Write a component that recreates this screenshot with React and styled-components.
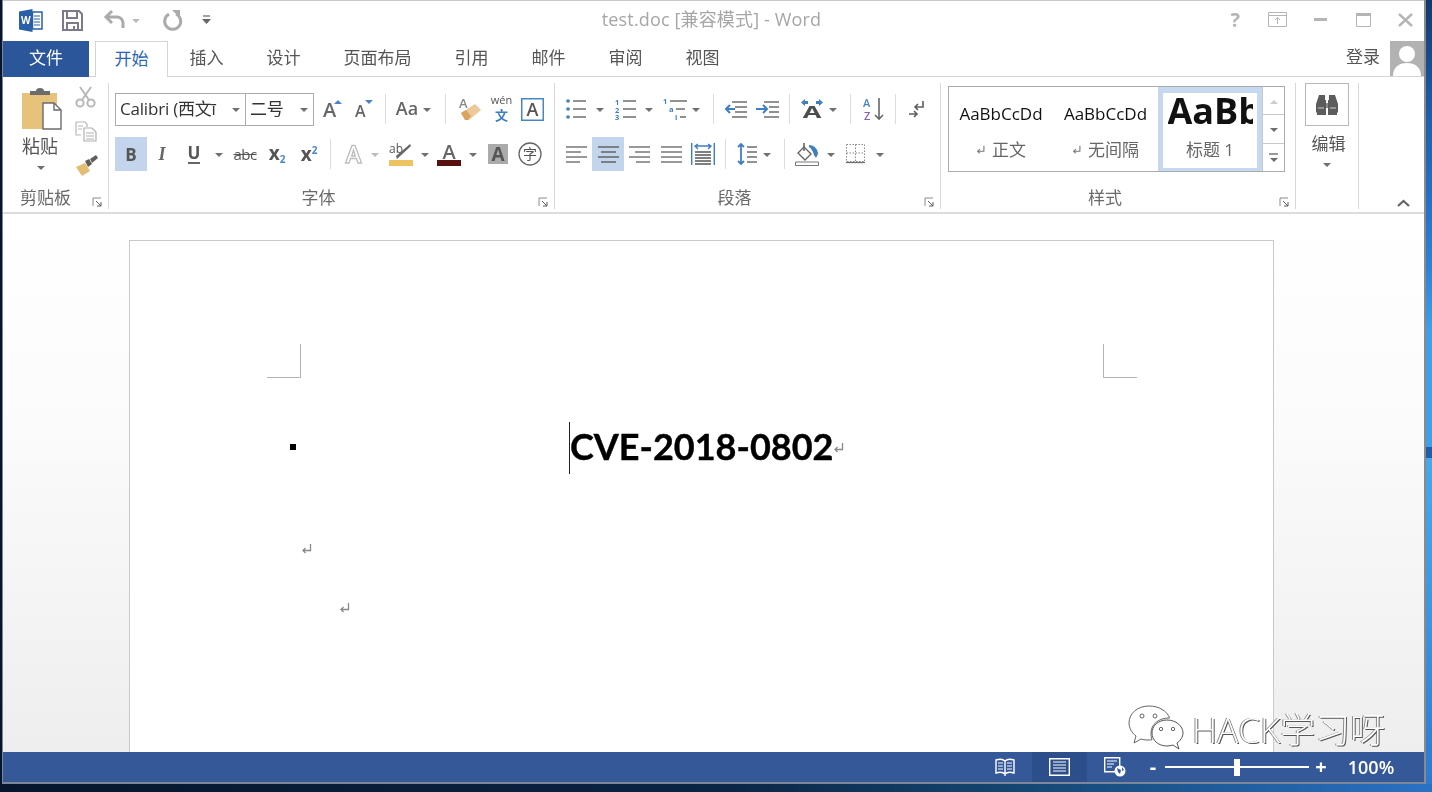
import React from 'react';
import styled, { createGlobalStyle } from 'styled-components';

const GlobalStyle = createGlobalStyle`
  html, body { margin: 0; padding: 0; height: 100%; overflow: hidden; }
  body {
    background: #0a2444;
    font-family: "Open Sans", "Noto Sans CJK SC", sans-serif;
  }
`;

const UI = `"Open Sans", "Noto Sans CJK SC", sans-serif`;

const Desktop = styled.div`
  width: 1432px;
  height: 792px;
  padding-left: 3px;
  box-sizing: border-box;
  background:
    linear-gradient(180deg, #123a6e 0, #1f5fae 120px, #2a7fd6 260px, #3f9fe8 330px, #3fa0ea 447px, #1f5ea6 447px, #1f5ea6 458px, #47a8ee 458px, #3b95e0 620px, #2b78d0 792px) right top / 8px 784px no-repeat,
    linear-gradient(90deg, #05162c 0, #0a2444 50%, #13456f 70%, #2a72c4 100%);
`;

const Window = styled.div`
  position: relative;
  width: 1421px;
  height: 784px;
  background: #fff;
  display: flex;
  flex-direction: column;
  border-top: 1px solid #c8c8c8;
  box-sizing: border-box;
  box-shadow: 2px 0 0 #8a8a8a, -1px 0 0 #7d8798;
  filter: blur(0.5px);
`;

const TitleBar = styled.div`
  height: 40px;
  flex: none;
  display: grid;
  grid-template-columns: 1fr auto 1fr;
  align-items: center;
`;

const QuickAccess = styled.div`
  display: flex;
  align-items: center;
  padding: 0 0 2px 15px;
`;

const Title = styled.div`
  font-size: 18px;
  letter-spacing: 0.15px;
  color: #a6a6a6;
  margin: -6px 0 0 -4px;
`;

const WindowButtons = styled.div`
  display: flex;
  justify-content: flex-end;
  align-items: center;
  padding: 0 11px 3px 0;
`;

const Ico = styled.svg`
  display: block;
  flex: none;
  overflow: visible;
  margin-left: ${p => p.$ml || 0}px;
`;

const TabRow = styled.div`
  height: 36px;
  flex: none;
  display: flex;
  align-items: stretch;
  border-bottom: 1px solid #d4d4d4;
  box-sizing: border-box;
`;

const FileTab = styled.div`
  width: 86px;
  display: flex;
  align-items: center;
  justify-content: center;
  background: #2b579a;
  color: #fff;
  font-size: 17px;
  padding-bottom: 5px;
  box-sizing: border-box;
  margin-right: 6px;
  margin-bottom: -1px;
`;

const Tab = styled.div`
  display: flex;
  align-items: center;
  padding: 0 21.5px 5px;
  font-size: 17px;
  color: ${p => (p.$active ? '#2b66b0' : '#555')};
  ${p => p.$active && `
    width: 73px;
    padding: 0 0 5px;
    justify-content: center;
    box-sizing: border-box;
    background: #fff;
    border: 1px solid #d4d4d4;
    border-bottom: none;
    margin-bottom: -1px;
    position: relative;
  `}
`;

const SignIn = styled.div`
  margin-left: auto;
  display: flex;
  align-items: center;
  font-size: 17px;
  color: #555;
  gap: 10px;
`;

const SignText = styled.span`
  margin-top: -7px;
`;

const Avatar = styled.div`
  width: 34px;
  height: 35px;
  background: #b2b2b2;
  overflow: hidden;
`;

const Ribbon = styled.div`
  height: 137px;
  flex: none;
  display: flex;
  padding-top: 6px;
  box-sizing: border-box;
  border-bottom: 2px solid #dcdcdc;
  position: relative;
`;

const Group = styled.div`
  width: ${p => p.$w}px;
  height: 126px;
  flex: none;
  display: flex;
  flex-direction: column;
  box-sizing: border-box;
  border-right: 1px solid #d8d8d8;
`;

const GroupBody = styled.div`
  flex: 1;
  display: flex;
  flex-direction: column;
  padding: ${p => p.$pt ?? 10}px 0 0 ${p => p.$pl ?? 0}px;
  min-height: 0;
`;

const GroupLabel = styled.div`
  height: 22px;
  flex: none;
  display: grid;
  grid-template-columns: 1fr auto 1fr;
  align-items: center;
  font-size: 17px;
  color: #6a6a6a;
  padding-bottom: 4px;
  box-sizing: border-box;
  line-height: 18px;
`;

const LabelText = styled.span`
  grid-column: 2;
  margin-right: ${p => p.$shift ?? 26}px;
`;

const Launcher = styled.svg`
  grid-column: 3;
  justify-self: end;
  margin-right: 5px;
  margin-top: 10px;
`;

const ToolRow = styled.div`
  display: flex;
  align-items: center;
  height: ${p => p.$h || 32}px;
  margin-top: ${p => p.$mt || 0}px;
`;

const Slot = styled.div`
  width: ${p => p.$w}px;
  margin-left: ${p => p.$ml || 0}px;
  flex: none;
  display: flex;
  align-items: center;
  justify-content: center;
`;

const Caret = styled.span`
  display: block;
  flex: none;
  width: 0;
  height: 0;
  margin-left: ${p => p.$ml || 0}px;
  margin-top: ${p => p.$mt ?? 2}px;
  border-left: 4px solid transparent;
  border-right: 4px solid transparent;
  border-top: 4px solid ${p => p.$color || '#6f6f6f'};
  transform: ${p => (p.$up ? 'rotate(180deg)' : 'none')};
`;

const RowSep = styled.span`
  display: block;
  flex: none;
  width: 1px;
  height: 30px;
  margin-left: ${p => p.$ml || 0}px;
  background: #dcdcdc;
`;

const Glyph = styled.span`
  display: block;
  font-family: ${p => p.$font || UI};
  font-size: ${p => p.$size || 18}px;
  font-weight: ${p => p.$weight || 400};
  font-style: ${p => (p.$italic ? 'italic' : 'normal')};
  color: ${p => p.$color || '#5f5f5f'};
  line-height: 1;
  white-space: nowrap;
  letter-spacing: ${p => p.$ls || 0}px;
  margin-top: ${p => p.$mt || 0}px;
  text-decoration: ${p => (p.$strike ? 'line-through' : 'none')};
  ${p => p.$under && 'border-bottom: 2px solid #666; padding-bottom: 1px;'}
`;

const SubNum = styled.span`
  font-size: 10px;
  color: #4a86c5;
  vertical-align: ${p => (p.$up ? '7px' : '-3px')};
`;

const Combo = styled.div`
  width: ${p => p.$w}px;
  margin-left: ${p => p.$ml || 0}px;
  height: 33px;
  flex: none;
  box-sizing: border-box;
  border: 1px solid #ababab;
  display: flex;
  align-items: center;
  padding: 0 5px 0 4px;
  font-size: 17px;
  color: #333;
  overflow: hidden;
  white-space: nowrap;
`;

const ComboText = styled.span`
  flex: 1;
  overflow: hidden;
  letter-spacing: -0.2px;
  margin-top: -4px;
`;

const ActiveBtn = styled.div`
  width: 32px;
  height: 34px;
  flex: none;
  margin-left: ${p => p.$ml || 0}px;
  background: #c3d5ec;
  display: flex;
  align-items: center;
  justify-content: center;
`;

const ClipBody = styled.div`
  flex: 1;
  display: flex;
  padding-left: 17px;
`;

const Paste = styled.div`
  width: 42px;
  display: flex;
  flex-direction: column;
  align-items: center;
  padding-top: 5px;
`;

const PasteLabel = styled.div`
  font-size: 18px;
  color: #555;
  margin: 3px 2px 0 0;
  line-height: 24px;
`;

const ClipSide = styled.div`
  display: flex;
  flex-direction: column;
  padding: 3px 0 0 13px;
  gap: 13px;
`;

const Gallery = styled.div`
  width: 337px;
  height: 86px;
  margin: 3px 0 0 7px;
  box-sizing: border-box;
  border: 1px solid #ababab;
  display: flex;
`;

const StyleItem = styled.div`
  width: ${p => p.$w}px;
  flex: none;
  box-sizing: border-box;
  display: flex;
  flex-direction: column;
  align-items: center;
  overflow: hidden;
  ${p => p.$active && 'border: 5px solid #c6d8ef; border-top-width: 6px; border-bottom-width: 3px;'}
`;

const Sample = styled.div`
  height: ${p => p.$h || 52}px;
  display: flex;
  align-items: ${p => (p.$clip ? 'flex-start' : 'center')};
  font-size: ${p => p.$size || 17}px;
  font-weight: ${p => p.$weight || 400};
  color: #111;
  white-space: nowrap;
  width: ${p => (p.$clip ? '85px' : 'auto')};
  overflow: hidden;
  line-height: 1;
`;

const StyleName = styled.div`
  display: flex;
  align-items: center;
  gap: 6px;
  font-size: 17px;
  color: #666;
  line-height: 22px;
`;

const GalleryScroll = styled.div`
  width: 21px;
  margin-left: auto;
  flex: none;
  display: flex;
  flex-direction: column;
  border-left: 1px solid #c8c8c8;
`;

const ScrollCell = styled.div`
  flex: 1;
  display: flex;
  flex-direction: column;
  align-items: center;
  justify-content: center;
  gap: 2px;
  & + & { border-top: 1px solid #c8c8c8; }
`;

const EditBody = styled.div`
  flex: 1;
  display: flex;
  flex-direction: column;
  align-items: center;
`;

const FindBox = styled.div`
  width: 44px;
  height: 43px;
  box-sizing: border-box;
  border: 1px solid #b8b8b8;
  display: flex;
  align-items: center;
  justify-content: center;
`;

const EditLabel = styled.div`
  font-size: 17px;
  color: #555;
  line-height: 24px;
  margin: 6px 0 0 3px;
`;

const Collapse = styled.svg`
  position: absolute;
  right: 14px;
  bottom: 5px;
`;

const DocArea = styled.div`
  flex: 1;
  min-height: 0;
  overflow: hidden;
  padding: 26px 0 0 126px;
  background: linear-gradient(180deg, #ffffff 0%, #fbfbfb 40%, #eeeeee 100%);
`;

const Page = styled.div`
  width: 1145px;
  height: 700px;
  box-sizing: border-box;
  background: #fff;
  border: 1px solid #c9c9c9;
  padding-top: 103px;
`;

const CropRow = styled.div`
  display: flex;
  justify-content: space-between;
  padding: 0 136px 0 137px;
`;

const CropMark = styled.div`
  width: 34px;
  height: 34px;
  box-sizing: border-box;
  border-bottom: 1px solid #b4b4b4;
  ${p => (p.$side === 'left' ? 'border-right: 1px solid #b4b4b4;' : 'border-left: 1px solid #b4b4b4;')}
`;

const HeadingRow = styled.div`
  display: flex;
  align-items: center;
  height: 52px;
  margin-top: 44px;
  padding-left: 160px;
`;

const Bullet = styled.span`
  width: 6px;
  height: 6px;
  background: #000;
  margin-top: -3px;
`;

const TextCursor = styled.span`
  width: 1px;
  height: 52px;
  background: #222;
  margin-left: 273px;
`;

const Heading = styled.span`
  font-family: Lato, "Open Sans", sans-serif;
  font-weight: 700;
  font-size: 36px;
  color: #000;
  line-height: 52px;
  margin-top: -5px;
  -webkit-text-stroke: 0.4px #000;
`;

const ParaMark = styled.div`
  padding-left: ${p => p.$pl}px;
  margin-top: ${p => p.$mt}px;
`;

const StatusBar = styled.div`
  height: 30px;
  flex: none;
  background: #355998;
  display: flex;
  align-items: center;
  justify-content: flex-end;
  color: #fff;
  border-bottom: 2px solid #7d8798;
`;

const ViewBtn = styled.div`
  width: 55px;
  height: 30px;
  display: flex;
  align-items: center;
  justify-content: center;
  background: ${p => (p.$active ? '#2c4f8c' : 'transparent')};
`;

const Zoom = styled.div`
  display: flex;
  align-items: center;
  margin-left: 3px;
`;

const ZoomSign = styled.span`
  font-size: 20px;
  font-weight: 700;
  line-height: 1;
  width: 16px;
  text-align: center;
`;

const Track = styled.div`
  width: 144px;
  height: 2px;
  background: #fff;
  margin: 0 4px;
  display: flex;
  align-items: center;
  justify-content: center;
`;

const Thumb = styled.span`
  width: 6px;
  height: 17px;
  background: #fff;
`;

const Percent = styled.span`
  font-size: 18px;
  width: 95px;
  text-align: center;
  padding-right: 11px;
  box-sizing: border-box;
  font-weight: 600;
`;

const Watermark = styled.div`
  position: absolute;
  left: 1125px;
  top: 704px;
  display: flex;
  align-items: center;
  gap: 8px;
  pointer-events: none;
`;

const WatermarkText = styled.span`
  font-weight: 300;
  font-size: 35px;
  color: #fff;
  line-height: 40px;
  white-space: nowrap;
  text-shadow: 1px 1px 0 #555, -1px 0 0 #888;
  margin-top: 2px;
`;

const Launch = () => (
  <Launcher width="11" height="11" viewBox="0 0 11 11" fill="none">
    <path d="M1 9V1h8" stroke="#8a8a8a" />
    <path d="M4 4l5 5M9 5v4H5" stroke="#5a5a5a" />
  </Launcher>
);

const Lines = ({ w, rows, stroke = '#6e6e6e', h = 20 }) => (
  <Ico width={w} height={h} viewBox={`0 0 ${w} ${h}`} fill="none">
    {rows.map(([a, b, y], i) => <path key={i} d={`M${a} ${y}H${b}`} stroke={stroke} strokeWidth="1.4" />)}
  </Ico>
);

const ReturnMark = ({ color = '#888', size = 12 }) => (
  <Ico width={size} height={size} viewBox="0 0 12 12" fill="none">
    <path d="M9.5 1v6.5H2M4.5 5L2 7.5 4.5 10" stroke={color} strokeWidth="1.3" />
  </Ico>
);

const App = () => (
  <Desktop>
    <GlobalStyle />
    <Window>
      <TitleBar>
        <QuickAccess>
          <Ico width="25" height="25" viewBox="0 0 25 25">
            <path d="M1 3.5L14.5 1v23L1 21.5z" fill="#2b5fa8" />
            <path d="M14.5 4H24v17h-9.5z" fill="#fff" stroke="#2b5fa8" strokeWidth="1.5" />
            <path d="M16 8h6M16 11h6M16 14h6M16 17h6" stroke="#2b5fa8" />
            <text x="3" y="16" fontSize="10" fontWeight="700" fontFamily="Open Sans" fill="#fff">W</text>
          </Ico>
          <Ico $ml="19" width="21" height="21" viewBox="0 0 21 21" fill="none">
            <path d="M1 1h16l3 3v16H1z" stroke="#7a7a8a" strokeWidth="2" />
            <path d="M5 2v6h10V2M5 20v-7h11v7" stroke="#7a7a8a" strokeWidth="2" />
            <path d="M11 16h2v3h-2z" fill="#7a7a8a" />
          </Ico>
          <Ico $ml="21" width="22" height="20" viewBox="0 0 22 20" fill="none">
            <path d="M2 7h11a6 6 0 0 1 6 6v5" stroke="#ababab" strokeWidth="3" />
            <path d="M8 1L2 7l6 6" stroke="#ababab" strokeWidth="3" />
          </Ico>
          <Caret $ml="6" $color="#bbb" />
          <Ico $ml="22" width="20" height="21" viewBox="0 0 20 21" fill="none">
            <path d="M7 4.200A8 8 0 1 0 14 4" stroke="#ababab" strokeWidth="3" />
            <path d="M10 0h8v8z" fill="#ababab" />
          </Ico>
          <Ico $ml="20" width="9" height="10" viewBox="0 0 9 10">
            <path d="M1 1h7" stroke="#666" strokeWidth="1.2" />
            <path d="M0 4h9L4.500 9z" fill="#666" />
          </Ico>
        </QuickAccess>
        <Title>test.doc [兼容模式] - Word</Title>
        <WindowButtons>
          <Glyph $size={20} $weight={700} $color="#b5b5b5">?</Glyph>
          <Ico $ml="28" width="19" height="15" viewBox="0 0 19 15" fill="none">
            <path d="M.5.500h18v14H.5zM.5 3.500h18" stroke="#b5b5b5" />
            <path d="M9.500 12V6M7 8l2.500-2.500L12 8" stroke="#b5b5b5" />
          </Ico>
          <Ico $ml="27" width="13" height="3" viewBox="0 0 13 3">
            <path d="M0 0h13v3H0z" fill="#b5b5b5" />
          </Ico>
          <Ico $ml="29" width="15" height="14" viewBox="0 0 15 14" fill="none">
            <path d="M.5 1.500h14v12H.5z" stroke="#b5b5b5" />
            <path d="M0 0h15v3H0z" fill="#b5b5b5" />
          </Ico>
          <Ico $ml="27" width="15" height="14" viewBox="0 0 15 14" fill="none">
            <path d="M1 1l13 12M14 1L1 13" stroke="#b5b5b5" strokeWidth="2.400" />
          </Ico>
        </WindowButtons>
      </TitleBar>

      <TabRow>
        <FileTab>文件</FileTab>
        <Tab $active>开始</Tab>
        <Tab>插入</Tab>
        <Tab>设计</Tab>
        <Tab>页面布局</Tab>
        <Tab>引用</Tab>
        <Tab>邮件</Tab>
        <Tab>审阅</Tab>
        <Tab>视图</Tab>
        <SignIn>
          <SignText>登录</SignText>
          <Avatar>
            <Ico width="34" height="35" viewBox="0 0 34 35">
              <circle cx="17" cy="13" r="8" fill="#fff" />
              <path d="M3 35c0-9 6-13 14-13s14 4 14 13z" fill="#fff" />
            </Ico>
          </Avatar>
        </SignIn>
      </TabRow>

      <Ribbon>
        <Group $w={106}>
          <ClipBody>
            <Paste>
              <Ico $ml="2" width="41" height="43" viewBox="0 0 41 43" fill="none">
                <path d="M0 5h35v36H0z" fill="#e6c27a" />
                <path d="M8 7V3h6a4 3 0 0 1 8 0h6v4z" fill="#6c6c6c" />
                <path d="M21 15h11l7 7v19H21z" fill="#fff" stroke="#6c6c6c" strokeWidth="1.4" />
                <path d="M32 15v7h7" stroke="#6c6c6c" strokeWidth="1.4" />
              </Ico>
              <PasteLabel>粘贴</PasteLabel>
              <Caret $mt={8} />
            </Paste>
            <ClipSide>
              <Ico width="21" height="22" viewBox="0 0 21 22" fill="none">
                <path d="M5 1l9 13M16 1L7 14" stroke="#b8b8b8" strokeWidth="2" />
                <circle cx="5" cy="17" r="3.600" stroke="#b8b8b8" strokeWidth="2" />
                <circle cx="16" cy="17" r="3.600" stroke="#b8b8b8" strokeWidth="2" />
              </Ico>
              <Ico width="22" height="21" viewBox="0 0 22 21" fill="none">
                <path d="M1 1h9l2 2v3M1 1v13h5M3 5h5M3 8h4" stroke="#b8b8b8" strokeWidth="1.2" />
                <path d="M9 7h8l4 4v9H9zM11 12h8M11 15h8M11 18h8" stroke="#b0b0b0" strokeWidth="1.2" />
              </Ico>
              <Ico width="24" height="21" viewBox="0 0 24 21">
                <path d="M1 12l9-4 5 8-8 5z" fill="#e3bd72" />
                <path d="M10 6l4-2 3 5-4 3z" fill="#5e5e5e" />
                <path d="M15 4l6-4 2 3-6 5z" fill="#5e5e5e" />
              </Ico>
            </ClipSide>
          </ClipBody>
          <GroupLabel><LabelText $shift={20}>剪贴板</LabelText><Launch /></GroupLabel>
        </Group>

        <Group $w={446}>
          <GroupBody $pl={6}>
            <ToolRow>
              <Combo $w={131}><ComboText>Calibri (西文ī</ComboText><Caret /></Combo>
              <Combo $w={69} $ml={-1}><ComboText>二号</ComboText><Caret /></Combo>
              <Slot $w={19} $ml={9}>
                <Ico width="19" height="22" viewBox="0 0 19 22">
                  <text x="0" y="19" fontSize="20" fontFamily="Open Sans" fontWeight="600" fill="#666">A</text>
                  <path d="M11 6l4-4 4 4z" fill="#4a86c5" />
                </Ico>
              </Slot>
              <Slot $w={18} $ml={13}>
                <Ico width="18" height="22" viewBox="0 0 18 22">
                  <text x="0" y="19" fontSize="16" fontFamily="Open Sans" fontWeight="600" fill="#666">A</text>
                  <path d="M10 2h8l-4 4z" fill="#4a86c5" />
                </Ico>
              </Slot>
              <RowSep $ml={12} />
              <Slot $w={22} $ml={10}><Glyph $size={18} $weight={600} $color="#666" $mt={-3}>Aa</Glyph></Slot>
              <Caret $ml={5} />
              <RowSep $ml={14} />
              <Slot $w={22} $ml={13}>
                <Ico width="22" height="24" viewBox="0 0 22 24">
                  <text x="0" y="11" fontSize="13" fontFamily="Open Sans" fontWeight="600" fill="#888">A</text>
                  <path d="M2 16l14-9 6 6-12 10h-4z" fill="#ecc99a" />
                  <path d="M2 16l5-3 5 6-3 4h-3z" fill="#d9a45e" />
                </Ico>
              </Slot>
              <Slot $w={23} $ml={9}>
                <Ico width="23" height="28" viewBox="0 0 23 28">
                  <text x="11.500" y="9" textAnchor="middle" fontSize="11" fontFamily="Open Sans" fill="#555">wén</text>
                  <text x="11.500" y="25" textAnchor="middle" fontSize="13" fontWeight="700" fontFamily="Noto Sans CJK SC" fill="#3d7fc1">文</text>
                </Ico>
              </Slot>
              <Slot $w={23} $ml={8}>
                <Ico width="23" height="23" viewBox="0 0 23 23">
                  <rect x=".75" y=".75" width="21.5" height="21.5" fill="#fff" stroke="#4a86c5" strokeWidth="1.5" />
                  <text x="11.500" y="18" textAnchor="middle" fontSize="18" fontWeight="600" fontFamily="Open Sans" fill="#555">A</text>
                </Ico>
              </Slot>
            </ToolRow>
            <ToolRow $h={34} $mt={12}>
              <ActiveBtn><Glyph $size={17} $weight={700} $color="#555">B</Glyph></ActiveBtn>
              <Slot $w={10} $ml={10}><Glyph $size={18} $italic $weight={600} $color="#666" $font='"Liberation Serif", serif'>I</Glyph></Slot>
              <Slot $w={12} $ml={21}><Glyph $size={17} $weight={700} $color="#555" $under>U</Glyph></Slot>
              <Caret $ml={15} />
              <Slot $w={24} $ml={10}><Glyph $size={15} $color="#555" $ls={-0.5} $strike>abc</Glyph></Slot>
              <Slot $w={18} $ml={11}><Glyph $size={19} $weight={700} $color="#555">x<SubNum>2</SubNum></Glyph></Slot>
              <Slot $w={18} $ml={14}><Glyph $size={19} $weight={700} $color="#555">x<SubNum $up>2</SubNum></Glyph></Slot>
              <RowSep $ml={12} />
              <Slot $w={19} $ml={13}>
                <Ico width="19" height="20" viewBox="0 0 19 20" fill="none">
                  <path d="M1.500 19L8 1.500h3L17.500 19h-3.500l-1.600-4.500H6.600L5 19zM7.700 12h3.600L9.500 6z" stroke="#bcbcbc" strokeWidth="1.3" />
                </Ico>
              </Slot>
              <Caret $ml={8} $color="#bbb" />
              <Slot $w={24} $ml={10}>
                <Ico width="24" height="24" viewBox="0 0 24 24">
                  <text x="0" y="11" fontSize="12" fontFamily="Open Sans" fill="#555">ab</text>
                  <path d="M8 17l14-13-1-2L7 14z" fill="#666" />
                  <path d="M0 18h24v6H0z" fill="#eec462" />
                </Ico>
              </Slot>
              <Caret $ml={8} />
              <Slot $w={24} $ml={8}>
                <Ico width="24" height="24" viewBox="0 0 24 24">
                  <text x="12" y="17" textAnchor="middle" fontSize="20" fontFamily="Open Sans" fontWeight="600" fill="#666">A</text>
                  <path d="M0 18h24v6H0z" fill="#5a0f10" />
                </Ico>
              </Slot>
              <Caret $ml={8} />
              <Slot $w={20} $ml={11}>
                <Ico width="20" height="20" viewBox="0 0 20 20">
                  <path d="M0 0h20v20H0z" fill="#ababab" />
                  <text x="10" y="17" textAnchor="middle" fontSize="19" fontWeight="700" fontFamily="Open Sans" fill="#555">A</text>
                </Ico>
              </Slot>
              <Slot $w={24} $ml={10}>
                <Ico width="24" height="24" viewBox="0 0 24 24" fill="none">
                  <circle cx="12" cy="12" r="11" stroke="#666" strokeWidth="1.3" />
                  <text x="12" y="17" textAnchor="middle" fontSize="14" fontFamily="Noto Sans CJK SC" fill="#555">字</text>
                </Ico>
              </Slot>
            </ToolRow>
          </GroupBody>
          <GroupLabel><LabelText>字体</LabelText><Launch /></GroupLabel>
        </Group>

        <Group $w={386}>
          <GroupBody $pl={11}>
            <ToolRow>
              <Slot $w={20}>
                <Ico width="20" height="22" viewBox="0 0 20 22" fill="none">
                  <path d="M7 3h13M7 11h13M7 19h13" stroke="#6e6e6e" strokeWidth="1.4" />
                  <path d="M2 3h.1M2 11h.1M2 19h.1" stroke="#3f7fc0" strokeWidth="3.6" strokeLinecap="round" />
                </Ico>
              </Slot>
              <Caret $ml={10} />
              <Slot $w={21} $ml={11}>
                <Ico width="21" height="22" viewBox="0 0 21 22" fill="none">
                  <path d="M8 3h13M8 11h13M8 19h13" stroke="#6e6e6e" strokeWidth="1.4" />
                  <text x="0" y="6.500" fontSize="7.500" fontWeight="700" fontFamily="Open Sans" fill="#3f7fc0">1</text>
                  <text x="0" y="14.500" fontSize="7.500" fontWeight="700" fontFamily="Open Sans" fill="#3f7fc0">2</text>
                  <text x="0" y="22" fontSize="7.500" fontWeight="700" fontFamily="Open Sans" fill="#3f7fc0">3</text>
                </Ico>
              </Slot>
              <Caret $ml={9} />
              <Slot $w={24} $ml={10}>
                <Ico width="24" height="22" viewBox="0 0 24 22" fill="none">
                  <path d="M7 3h17M13 11h9M17 19h6" stroke="#6e6e6e" strokeWidth="1.4" />
                  <text x="0" y="6" fontSize="7.500" fontWeight="700" fontFamily="Open Sans" fill="#3f7fc0">1</text>
                  <text x="6" y="14" fontSize="7.500" fontWeight="700" fontFamily="Open Sans" fill="#3f7fc0">a</text>
                  <text x="12" y="22" fontSize="7.500" fontWeight="700" fontFamily="Open Sans" fill="#3f7fc0">i</text>
                </Ico>
              </Slot>
              <Caret $ml={5} />
              <RowSep $ml={13} />
              <Slot $w={23} $ml={10}>
                <Ico width="23" height="18" viewBox="0 0 23 18" fill="none">
                  <path d="M8 2h15M11 7h12M11 12h12M8 17h15" stroke="#6e6e6e" strokeWidth="1.4" />
                  <path d="M11 9H2M6 5L2 9l4 4" stroke="#3f7fc0" strokeWidth="2" />
                </Ico>
              </Slot>
              <Slot $w={23} $ml={9}>
                <Ico width="23" height="18" viewBox="0 0 23 18" fill="none">
                  <path d="M8 2h15M13 7h10M13 12h10M8 17h15" stroke="#6e6e6e" strokeWidth="1.4" />
                  <path d="M0 9h11M7 5l4 4-4 4" stroke="#3f7fc0" strokeWidth="2" />
                </Ico>
              </Slot>
              <RowSep $ml={10} />
              <Slot $w={22} $ml={11}>
                <Ico width="22" height="20" viewBox="0 0 22 20">
                  <text x="0" y="0" fontSize="18" fontWeight="700" fontFamily="Open Sans" fill="#4d4d4d" transform="translate(11 19) scale(1.5 0.85)" textAnchor="middle">A</text>
                  <path d="M0 3.500L4 0v2h3v3H4v2zM22 3.500L18 0v2h-3v3h3v2z" fill="#3f7fc0" />
                </Ico>
              </Slot>
              <Caret $ml={6} />
              <RowSep $ml={13} />
              <Slot $w={20} $ml={12}>
                <Ico width="20" height="24" viewBox="0 0 20 24" fill="none">
                  <text x="0" y="10" fontSize="11" fontWeight="600" fontFamily="Open Sans" fill="#4a86c5">A</text>
                  <text x="1" y="23" fontSize="11" fontWeight="600" fontFamily="Open Sans" fill="#8a5cb5">Z</text>
                  <path d="M16 1v21M12 18l4 4 4-4" stroke="#666" strokeWidth="1.6" />
                </Ico>
              </Slot>
              <RowSep $ml={12} />
              <Slot $w={16} $ml={13}>
                <Ico width="16" height="18" viewBox="0 0 16 18" fill="none">
                  <path d="M14 1v6H6M9 4L6 7l3 3" stroke="#5e5e5e" strokeWidth="1.6" />
                  <path d="M0 14h8M5 11l3 3-3 3" stroke="#5e5e5e" strokeWidth="1.6" />
                </Ico>
              </Slot>
            </ToolRow>
            <ToolRow $h={34} $mt={12}>
              <Slot $w={21}><Lines w={21} h={18} rows={[[0, 21, 2], [0, 15, 7], [0, 21, 12], [0, 14, 17]]} /></Slot>
              <ActiveBtn $ml={5}><Lines w={21} h={18} stroke="#5b5b5b" rows={[[0, 21, 2], [3, 18, 7], [0, 21, 12], [3, 18, 17]]} /></ActiveBtn>
              <Slot $w={21} $ml={5}><Lines w={21} h={18} rows={[[0, 21, 2], [6, 21, 7], [0, 21, 12], [7, 21, 17]]} /></Slot>
              <Slot $w={21} $ml={11}><Lines w={21} h={18} rows={[[0, 21, 2], [0, 21, 7], [0, 21, 12], [0, 21, 17]]} /></Slot>
              <Slot $w={24} $ml={9}>
                <Ico width="24" height="22" viewBox="0 0 24 22" fill="none">
                  <path d="M.7 0v22M23.300 0v22" stroke="#3f7fc0" strokeWidth="1.4" />
                  <path d="M4 3h16M7 1L4 3l3 3M17 1l3 2-3 3" stroke="#3f7fc0" strokeWidth="1.4" />
                  <path d="M4 9h16M4 12h16M4 15h16M4 18h16M4 21h16" stroke="#555" strokeWidth="1.300" />
                </Ico>
              </Slot>
              <RowSep $ml={10} />
              <Slot $w={20} $ml={11}>
                <Ico width="20" height="24" viewBox="0 0 20 24" fill="none">
                  <path d="M4 2v20M1 5l3-3 3 3M1 19l3 3 3-3" stroke="#3f7fc0" strokeWidth="1.800" />
                  <path d="M10 5h10M10 10h10M10 15h10M10 20h10" stroke="#6e6e6e" strokeWidth="1.4" />
                </Ico>
              </Slot>
              <Caret $ml={6} />
              <RowSep $ml={13} />
              <Slot $w={24} $ml={10}>
                <Ico width="24" height="24" viewBox="0 0 24 24" fill="none">
                  <path d="M3 11l6-6 7 7-6 6z" fill="#fff" stroke="#666" strokeWidth="1.4" />
                  <path d="M9 1v8" stroke="#666" strokeWidth="1.6" />
                  <path d="M14 3c5 0 9 4 9 9l-2 4-2-3c-1-4-3-7-5-8z" fill="#3f7fc0" />
                  <path d="M.5 20h23v3.500H.5z" stroke="#777" />
                </Ico>
              </Slot>
              <Caret $ml={8} />
              <Slot $w={19} $ml={11}>
                <Ico width="19" height="20" viewBox="0 0 19 20" fill="none">
                  <path d="M.5.500h18v17H.5zM9.500.500v17M.5 9h18" stroke="#8a8a8a" strokeDasharray="1.500 1.500" />
                  <path d="M0 18.500h19" stroke="#6e6e6e" strokeWidth="1.300" />
                </Ico>
              </Slot>
              <Caret $ml={11} />
            </ToolRow>
          </GroupBody>
          <GroupLabel><LabelText>段落</LabelText><Launch /></GroupLabel>
        </Group>

        <Group $w={355}>
          <Gallery>
            <StyleItem $w={104}>
              <Sample>AaBbCcDd</Sample>
              <StyleName><ReturnMark color="#777" size={10} />正文</StyleName>
            </StyleItem>
            <StyleItem $w={105}>
              <Sample>AaBbCcDd</Sample>
              <StyleName><ReturnMark color="#777" size={10} />无间隔</StyleName>
            </StyleItem>
            <StyleItem $w={104} $active>
              <Sample $size={36} $weight={700} $h={46} $clip>AaBb</Sample>
              <StyleName>标题 1</StyleName>
            </StyleItem>
            <GalleryScroll>
              <ScrollCell><Caret $up $color="#ccc" /></ScrollCell>
              <ScrollCell><Caret /></ScrollCell>
              <ScrollCell><Lines w={9} h={2} stroke="#6f6f6f" rows={[[0, 9, 1]]} /><Caret $mt={1} /></ScrollCell>
            </GalleryScroll>
          </Gallery>
          <GroupBody $pt={0} />
          <GroupLabel><LabelText>样式</LabelText><Launch /></GroupLabel>
        </Group>

        <Group $w={63}>
          <EditBody>
            <FindBox>
              <Ico width="22" height="20" viewBox="0 0 22 20">
                <path d="M3 0h6v5h1v15H1v-2l-1-1V9z" fill="#5c5c5c" />
                <path d="M19 0h-6v5h-1v15h9v-2l1-1V9z" fill="#5c5c5c" />
                <path d="M10 8h2v5h-2z" fill="#8a8a8a" />
                <path d="M2 13h6M14 13h6" stroke="#a8a8a8" strokeWidth="1.500" />
              </Ico>
            </FindBox>
            <EditLabel>编辑</EditLabel>
            <Caret $mt={7} />
          </EditBody>
        </Group>

        <Collapse width="13" height="8" viewBox="0 0 13 8" fill="none">
          <path d="M1 7l5.500-5L12 7" stroke="#666" strokeWidth="2.200" />
        </Collapse>
      </Ribbon>

      <DocArea>
        <Page>
          <CropRow>
            <CropMark $side="left" />
            <CropMark $side="right" />
          </CropRow>
          <HeadingRow>
            <Bullet />
            <TextCursor />
            <Heading>CVE-2018-0802</Heading>
            <ReturnMark />
          </HeadingRow>
          <ParaMark $pl={171} $mt={69}><ReturnMark /></ParaMark>
          <ParaMark $pl={209} $mt={47}><ReturnMark /></ParaMark>
        </Page>
      </DocArea>

      <StatusBar>
        <ViewBtn>
          <Ico width="20" height="19" viewBox="0 0 20 19" fill="none">
            <path d="M10 3C8 1 4 1 1 2v13c3-1 7-1 9 1 2-2 6-2 9-1V2c-3-1-7-1-9 1zM10 3v15" stroke="#fff" strokeWidth="1.400" />
            <path d="M3 5h5M3 8h5M3 11h5M12 5h5M12 8h5M12 11h5" stroke="#fff" />
          </Ico>
        </ViewBtn>
        <ViewBtn $active>
          <Ico width="21" height="18" viewBox="0 0 21 18" fill="none">
            <path d="M.7.700h19.600v16.600H.7z" stroke="#fff" strokeWidth="1.400" />
            <path d="M4 4h13M4 7h13M4 10h13M4 13h13" stroke="#fff" strokeWidth="1.200" />
          </Ico>
        </ViewBtn>
        <ViewBtn>
          <Ico width="22" height="20" viewBox="0 0 22 20" fill="none">
            <path d="M.7.700h15v14H.7z" stroke="#fff" strokeWidth="1.400" />
            <path d="M3 4h10M3 7h7M3 10h5" stroke="#fff" strokeWidth="1.200" />
            <circle cx="16" cy="14" r="5.500" fill="#fff" />
            <path d="M13 11l4 2-1 4-2-2zM18 10l2 3-2 1z" fill="#355998" />
          </Ico>
        </ViewBtn>
        <Zoom>
          <ZoomSign>-</ZoomSign>
          <Track><Thumb /></Track>
          <ZoomSign>+</ZoomSign>
        </Zoom>
        <Percent>100%</Percent>
      </StatusBar>

      <Watermark>
        <Ico width="56" height="48" viewBox="0 0 56 48" fill="none">
          <path d="M21 1C10 1 1 8 1 18c0 5 3 10 7 13l-2 7 7-4c3 1 5 1 8 1 1 0 2 0 3-.2C23 32 23 30 23 28c0-9 8-15 18-15h.6C39 6 31 1 21 1z" fill="#fff" stroke="#666" />
          <path d="M39 15c-9 0-15 6-15 13s6 13 15 13c2 0 4-.3 6-1l6 4-2-6c3-2 6-6 6-10 0-7-7-13-16-13z" fill="#fff" stroke="#555" />
          <circle cx="14" cy="11" r="2" stroke="#666" />
          <circle cx="27" cy="11" r="2" stroke="#666" />
          <circle cx="33" cy="24" r="1.700" stroke="#666" />
          <circle cx="45" cy="24" r="1.700" stroke="#666" />
        </Ico>
        <WatermarkText>HACK学习呀</WatermarkText>
      </Watermark>
    </Window>
  </Desktop>
);

export default App;
